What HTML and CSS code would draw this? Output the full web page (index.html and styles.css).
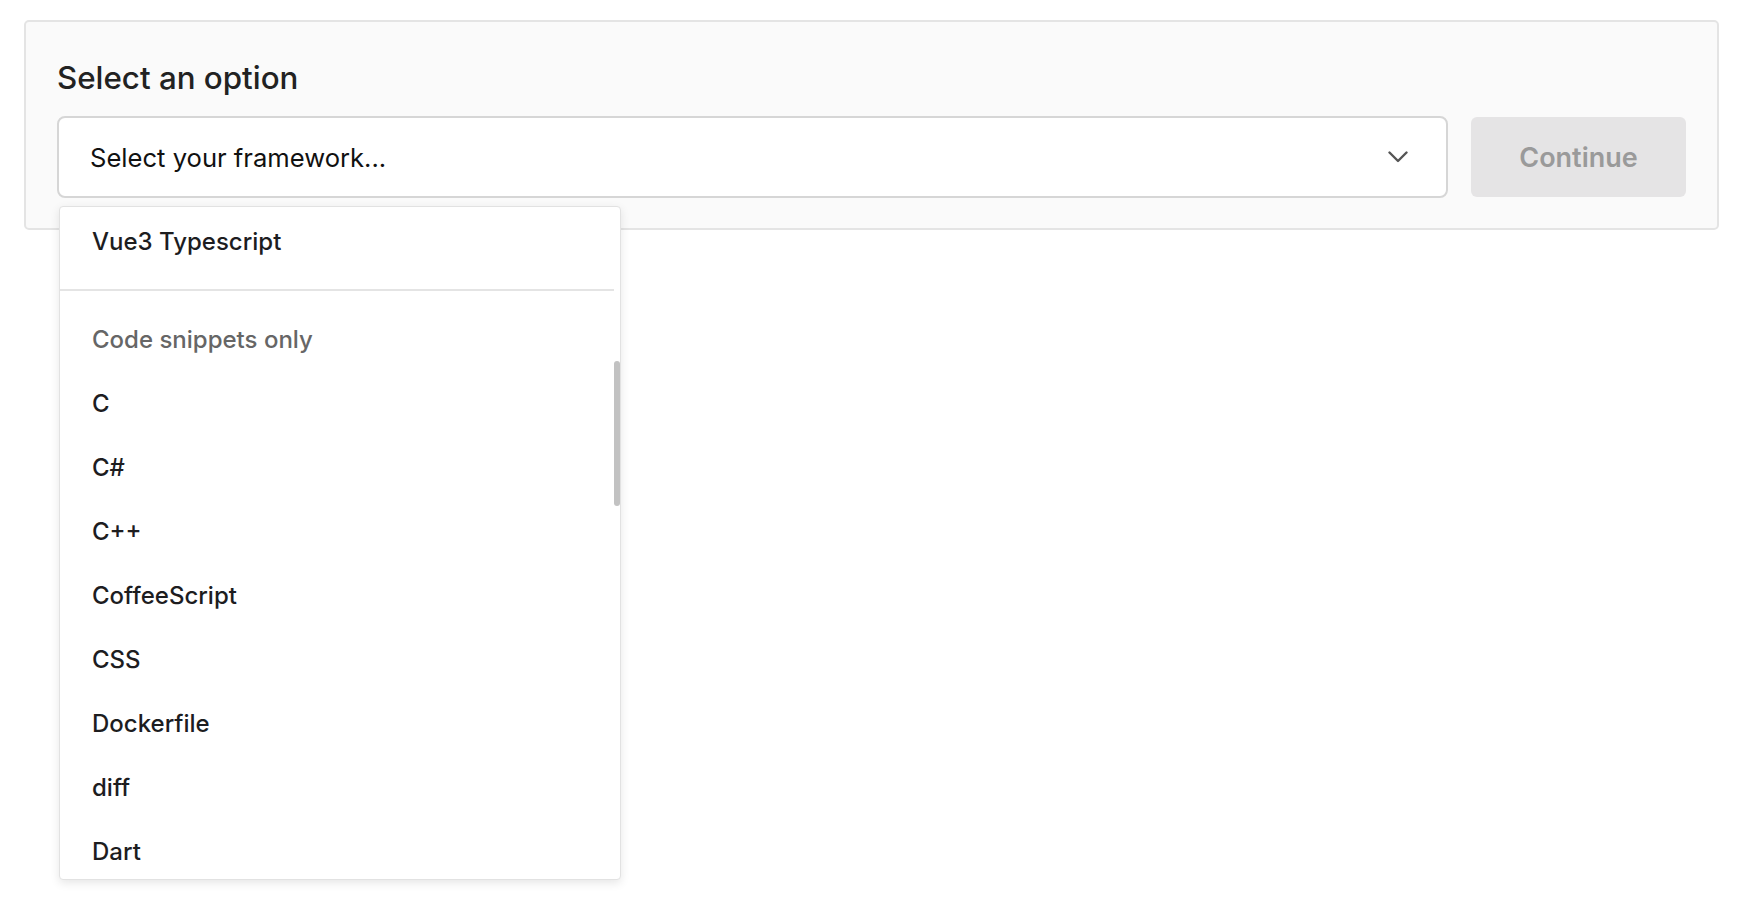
FILE: index.html
```html
<!DOCTYPE html>
<html lang="en">
<head>
<meta charset="utf-8">
<title>Select an option</title>
<link rel="stylesheet" href="styles.css">
</head>
<body>
  <section class="panel">
    <h2 class="panel-title">Select an option</h2>
    <div class="controls">
      <div class="select-wrap">
        <div class="select">
          <span class="select-value">Select your framework...</span>
          <svg class="chevron" width="20" height="12" viewBox="0 0 20 12" aria-hidden="true">
            <polyline points="1.5,1.5 10,10 18.5,1.5" fill="none" stroke="#555" stroke-width="2.4" stroke-linecap="round" stroke-linejoin="round"/>
          </svg>
        </div>
        <div class="dropdown">
          <div class="dropdown-list">
            <div class="option">Vue3 Typescript</div>
            <div class="divider"></div>
            <div class="group-label">Code snippets only</div>
            <div class="option">C</div>
            <div class="option">C#</div>
            <div class="option">C++</div>
            <div class="option">CoffeeScript</div>
            <div class="option">CSS</div>
            <div class="option">Dockerfile</div>
            <div class="option">diff</div>
            <div class="option">Dart</div>
          </div>
          <div class="scroll-track"><div class="scroll-thumb"></div></div>
        </div>
      </div>
      <button class="continue" type="button" disabled>Continue</button>
    </div>
  </section>
</body>
</html>
```

FILE: styles.css
```css
* { box-sizing: border-box; }

html, body {
  margin: 0;
  background: #ffffff;
}

html {
  height: 100%;
}

body {
  min-height: 100%;
  padding: 20px 21px 0 24px;
  font-family: "Inter", "Noto Sans", "Liberation Sans", sans-serif;
  color: #1d1d1f;
}

.panel {
  position: relative;
  background: #fafafa;
  border: 2px solid #e4e4e4;
  border-radius: 5px;
  padding: 36px 31px 30px 31px;
}

.panel-title {
  margin: 0 0 18px 0;
  font-size: 31.3px;
  line-height: 40px;
  font-weight: 500;
  color: #222222;
}

.controls {
  display: flex;
  align-items: center;
  gap: 23px;
}

.select-wrap {
  position: relative;
  flex: 1;
}

.select {
  height: 82px;
  display: flex;
  align-items: center;
  justify-content: space-between;
  background: #ffffff;
  border: 2px solid #d6d6d6;
  border-radius: 8px;
  padding: 0 38px 0 31px;
}

.select-value {
  font-size: 25.6px;
  font-weight: 400;
  color: #111111;
}

.chevron {
  display: block;
}

.continue {
  width: 215px;
  height: 80px;
  border: none;
  border-radius: 6px;
  background: #e5e4e5;
  color: #9a9a9a;
  font-family: inherit;
  font-size: 27px;
  font-weight: 600;
}

.dropdown {
  position: absolute;
  z-index: 10;
  top: calc(100% + 8px);
  left: 2px;
  width: 562px;
  height: 674px;
  background: #ffffff;
  border: 1px solid #e2e2e2;
  border-radius: 4px;
  box-shadow: 0 3px 10px rgba(0, 0, 0, 0.10);
  overflow: hidden;
  display: flex;
}

.dropdown-list {
  flex: 1;
  padding-top: 2px;
}

.option,
.group-label {
  height: 64px;
  display: flex;
  align-items: center;
  padding-left: 32px;
  font-size: 24px;
  font-weight: 500;
  color: #1d1d1f;
}

.group-label {
  color: #666666;
}

.divider {
  height: 2px;
  background: #e4e4e4;
  margin: 16px 0 16px 0;
}

.scroll-track {
  width: 6px;
  flex: none;
}

.scroll-thumb {
  margin-top: 154px;
  height: 145px;
  border-radius: 3px;
  background: #c2c2c2;
}
```
